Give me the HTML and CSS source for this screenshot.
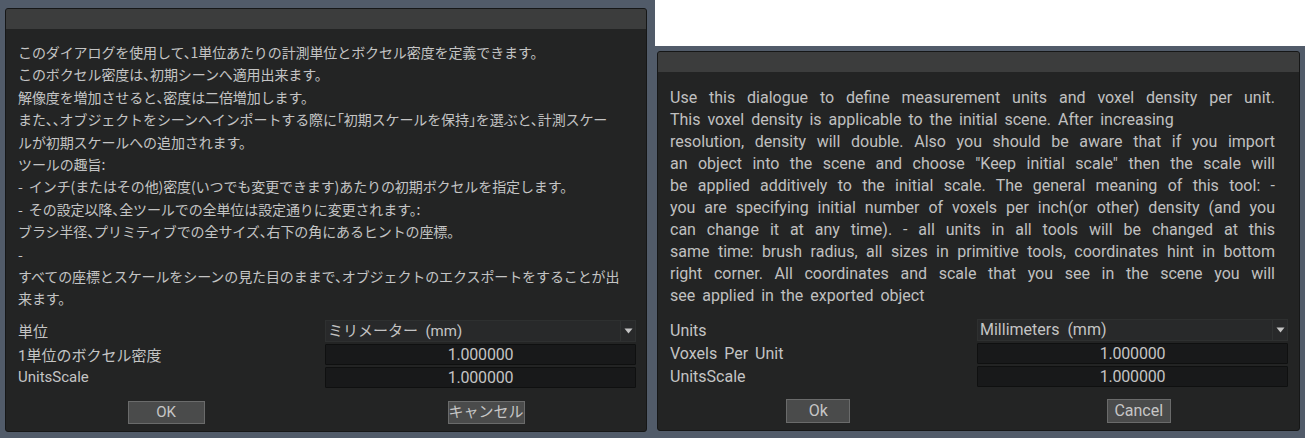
FILE: index.html
```html
<!DOCTYPE html>
<html lang="ja">
<head>
<meta charset="utf-8">
<title>Units dialog</title>
<link rel="stylesheet" href="styles.css">
</head>
<body>
<div class="page">
  <div class="col-left">
    <div class="dialog dlg-jp">
      <div class="titlebar"></div>
      <div class="desc jp">
        <div class="line">このダイアログを使用して、1単位あたりの計測単位とボクセル密度を定義できます。</div>
        <div class="line">このボクセル密度は、初期シーンへ適用出来ます。</div>
        <div class="line">解像度を増加させると、密度は二倍増加します。</div>
        <div class="line">また、、オブジェクトをシーンへインポートする際に「初期スケールを保持」を選ぶと、計測スケー</div>
        <div class="line">ルが初期スケールへの追加されます。</div>
        <div class="line">ツールの趣旨:</div>
        <div class="line">-&nbsp; インチ(またはその他)密度(いつでも変更できます)あたりの初期ボクセルを指定します。</div>
        <div class="line">-&nbsp; その設定以降、全ツールでの全単位は設定通りに変更されます。:</div>
        <div class="line">ブラシ半径、プリミティブでの全サイズ、右下の角にあるヒントの座標。</div>
        <div class="line">-</div>
        <div class="line">すべての座標とスケールをシーンの見た目のままで、オブジェクトのエクスポートをすることが出</div>
        <div class="line">来ます。</div>
      </div>
      <div class="form">
        <div class="row row-combo">
          <div class="label">単位</div>
          <div class="combo"><span class="combo-text">ミリメーター&nbsp; (mm)</span><span class="combo-arrow"><svg width="9" height="6" viewBox="0 0 9 6"><path d="M0.5 0.5 L8.5 0.5 L4.5 5.5 Z" fill="#c4c4c4"/></svg></span></div>
        </div>
        <div class="row">
          <div class="label">1単位のボクセル密度</div>
          <div class="input">1.000000</div>
        </div>
        <div class="row">
          <div class="label">UnitsScale</div>
          <div class="input">1.000000</div>
        </div>
      </div>
      <div class="buttons">
        <div class="btn-cell"><div class="btn">OK</div></div>
        <div class="btn-cell"><div class="btn">キャンセル</div></div>
      </div>
    </div>
  </div>
  <div class="col-right">
    <div class="white"></div>
    <div class="dialog dlg-en">
      <div class="titlebar"></div>
      <div class="desc en">
        <div class="line j">Use this dialogue to define measurement units and voxel density per unit.</div>
        <div class="line">This voxel density is applicable to the initial scene. After increasing</div>
        <div class="line j">resolution, density will double. Also you should be aware that if you import</div>
        <div class="line j">an object into the scene and choose "Keep initial scale" then the scale will</div>
        <div class="line j">be applied additively to the initial scale. The general meaning of this tool: -</div>
        <div class="line j">you are specifying initial number of voxels per inch(or other) density (and you</div>
        <div class="line j">can change it at any time). - all units in all tools will be changed at this</div>
        <div class="line j">same time: brush radius, all sizes in primitive tools, coordinates hint in bottom</div>
        <div class="line j">right corner. All coordinates and scale that you see in the scene you will</div>
        <div class="line">see applied in the exported object</div>
      </div>
      <div class="form">
        <div class="row row-combo">
          <div class="label">Units</div>
          <div class="combo"><span class="combo-text">Millimeters&nbsp; (mm)</span><span class="combo-arrow"><svg width="9" height="6" viewBox="0 0 9 6"><path d="M0.5 0.5 L8.5 0.5 L4.5 5.5 Z" fill="#c4c4c4"/></svg></span></div>
        </div>
        <div class="row">
          <div class="label">Voxels Per Unit</div>
          <div class="input">1.000000</div>
        </div>
        <div class="row">
          <div class="label">UnitsScale</div>
          <div class="input">1.000000</div>
        </div>
      </div>
      <div class="buttons">
        <div class="btn-cell"><div class="btn">Ok</div></div>
        <div class="btn-cell"><div class="btn">Cancel</div></div>
      </div>
    </div>
  </div>
</div>
</body>
</html>
```
FILE: styles.css
```css
* { box-sizing: border-box; }
html, body {
  margin: 0;
  padding: 0;
  width: 1305px;
  height: 438px;
  overflow: hidden;
}
body {
  background: #515b69;
  font-family: Roboto, "Noto Sans CJK JP", sans-serif;
  color: #c4c4c4;
}
.page {
  display: flex;
  width: 1305px;
  height: 438px;
}
.col-left {
  width: 655px;
  padding: 8px 0 0 5px;
}
.col-right {
  flex: 1;
  display: flex;
  flex-direction: column;
}
.white {
  height: 46px;
  background: #ffffff;
}
.dialog {
  width: 642px;
  background: #232424;
  border: 1px solid #161717;
  border-radius: 3px;
  overflow: hidden;
  display: flex;
  flex-direction: column;
}
.dlg-en {
  margin: 5px 0 0 2px;
  width: 643px;
}
.titlebar {
  height: 20px;
  background: #3c3d3d;
  flex: none;
}
.desc {
  padding: 0 10px 0 12px;
  white-space: nowrap;
}
.desc.jp {
  margin-top: 12px;
  font-family: "Noto Sans CJK JP", sans-serif;
  font-size: 14px;
  line-height: 22.4px;
  font-feature-settings: "halt";
  letter-spacing: -0.1px;
}
.desc.en {
  margin-top: 15px;
  padding-right: 24px;
  font-family: Roboto, sans-serif;
  font-size: 16px;
  line-height: 22px;
  word-spacing: 3px;
  color: #c0c0c0;
}
.desc.en .line { height: 22px; }
.desc.en .line.j {
  white-space: normal;
  text-align: justify;
  text-align-last: justify;
}
.form {
  display: flex;
  flex-direction: column;
  gap: 2px;
  margin-top: 10px;
}
.dlg-en .form { margin-top: 12px; }
.row {
  display: flex;
  align-items: center;
  height: 21px;
  padding: 0 10px 0 12px;
}
.dlg-en .row { padding-right: 11px; }
.row-combo { height: 22px; }
.label {
  width: 307px;
  font-size: 16px;
  font-family: Roboto, "Noto Sans CJK JP", sans-serif;
  white-space: nowrap;
  word-spacing: 3px;
}
.dlg-jp .label { font-size: 15px; }
.combo {
  flex: 1;
  height: 22px;
  display: flex;
  background: #28292a;
  border: 1px solid #2e3030;
}
.combo-text {
  flex: 1;
  padding-left: 2px;
  font-size: 16px;
  line-height: 20px;
  white-space: nowrap;
}
.dlg-jp .combo-text { font-size: 15px; }
.combo-arrow {
  width: 15px;
  border-left: 1px solid #303232;
  display: flex;
  align-items: center;
  justify-content: center;
}
.input {
  flex: 1;
  height: 21px;
  background: #18191a;
  border: 1px solid #0f1010;
  border-radius: 1px;
  text-align: center;
  font-size: 16px;
  line-height: 19px;
  letter-spacing: -0.2px;
}
.buttons {
  display: flex;
  margin-top: 13px;
  padding-bottom: 7px;
}
.dlg-en .buttons { margin-top: 12px; }
.btn-cell {
  flex: 1;
  display: flex;
  justify-content: center;
}
.btn {
  width: 77px;
  height: 23px;
  background: #4a4b4b;
  border: 1px solid #6a6b6b;
  text-align: center;
  font-size: 16px;
  line-height: 21px;
  color: #c6c6c6;
  font-family: Roboto, "Noto Sans CJK JP", sans-serif;
}
.dlg-jp .btn { font-size: 15px; }
.dlg-en .btn {
  width: 64px;
  height: 24px;
  line-height: 22px;
}
```
